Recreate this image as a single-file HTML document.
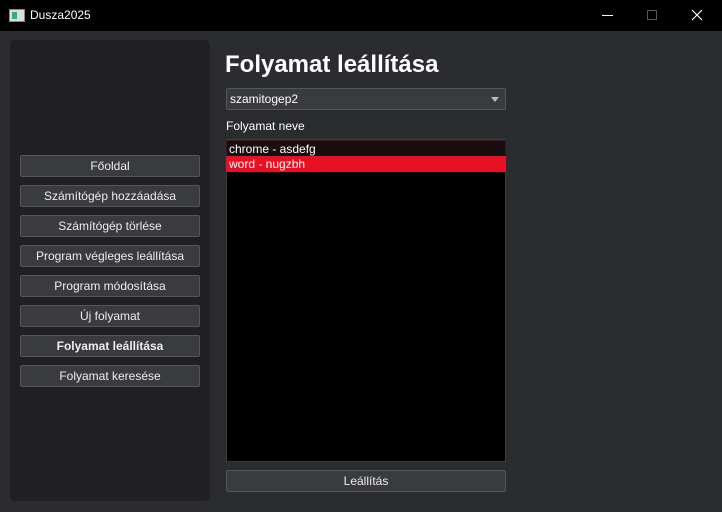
<!DOCTYPE html>
<html><head><style>
body{margin:0;width:722px;height:512px;background:#2b2c30;font-family:"Liberation Sans",sans-serif;position:relative;overflow:hidden;color:#fff}
.tb{position:absolute;left:0;top:0;width:722px;height:31px;background:#000}
.side{position:absolute;left:10px;top:40px;width:200px;height:461px;background:#202023;border-radius:5px}
.btn{position:absolute;left:20px;width:178px;height:20px;background:#3a3b3f;border:1px solid #55565a;border-radius:2px;font-size:12px;text-align:center;line-height:20px;color:#eee}
.abs{position:absolute}
</style></head><body>
<div class="tb">
<div class="abs" style="left:9px;top:9px;width:14px;height:11px;background:#ddd;border:1px solid #888"><div style="position:absolute;left:2px;top:2px;width:5px;height:7px;background:#3a8;"></div></div>
<div class="abs" style="left:30px;top:8px;font-size:12px">Dusza2025</div>
<svg class="abs" style="left:0;top:0" width="722" height="31"><line x1="602" y1="15.5" x2="613" y2="15.5" stroke="#fff" stroke-width="1"/><rect x="647.5" y="10.5" width="9" height="9" fill="none" stroke="#555"/><path d="M692 10L702 20M702 10L692 20" stroke="#fff" stroke-width="1.2"/></svg>
</div>
<div class="side"></div>
<div class="btn" style="top:155px">Főoldal</div>
<div class="btn" style="top:185px">Számítógép hozzáadása</div>
<div class="btn" style="top:215px">Számítógép törlése</div>
<div class="btn" style="top:245px">Program végleges leállítása</div>
<div class="btn" style="top:275px">Program módosítása</div>
<div class="btn" style="top:305px">Új folyamat</div>
<div class="btn" style="top:335px;font-weight:bold">Folyamat leállítása</div>
<div class="btn" style="top:365px">Folyamat keresése</div>
<div class="abs" style="left:225px;top:51px;font-size:24px;font-weight:bold">Folyamat leállítása</div>
<div class="abs" style="left:226px;top:88px;width:278px;height:20px;background:#3a3b3f;border:1px solid #55565a;border-radius:2px;font-size:12px;line-height:20px;text-indent:3px">szamitogep2<div style="position:absolute;right:6px;top:8px;width:0;height:0;border-left:4px solid transparent;border-right:4px solid transparent;border-top:5px solid #bbb"></div></div>
<div class="abs" style="left:226px;top:119px;font-size:12px">Folyamat neve</div>
<div class="abs" style="left:226px;top:139px;width:280px;height:323px;background:#000;border:1px solid #3a3b3f;box-sizing:border-box"></div>
<div class="abs" style="left:226px;top:140px;width:278px;height:16px;background:#1a0d0f;border:1px solid #3a1a1d;font-size:12px;line-height:16px;text-indent:2px">chrome - asdefg</div>
<div class="abs" style="left:226px;top:156px;width:280px;height:16px;background:#e81123;font-size:12px;line-height:16px;text-indent:3px">word - nugzbh</div>
<div class="abs btn" style="left:226px;top:470px;width:278px">Leállítás</div>
</body></html>
